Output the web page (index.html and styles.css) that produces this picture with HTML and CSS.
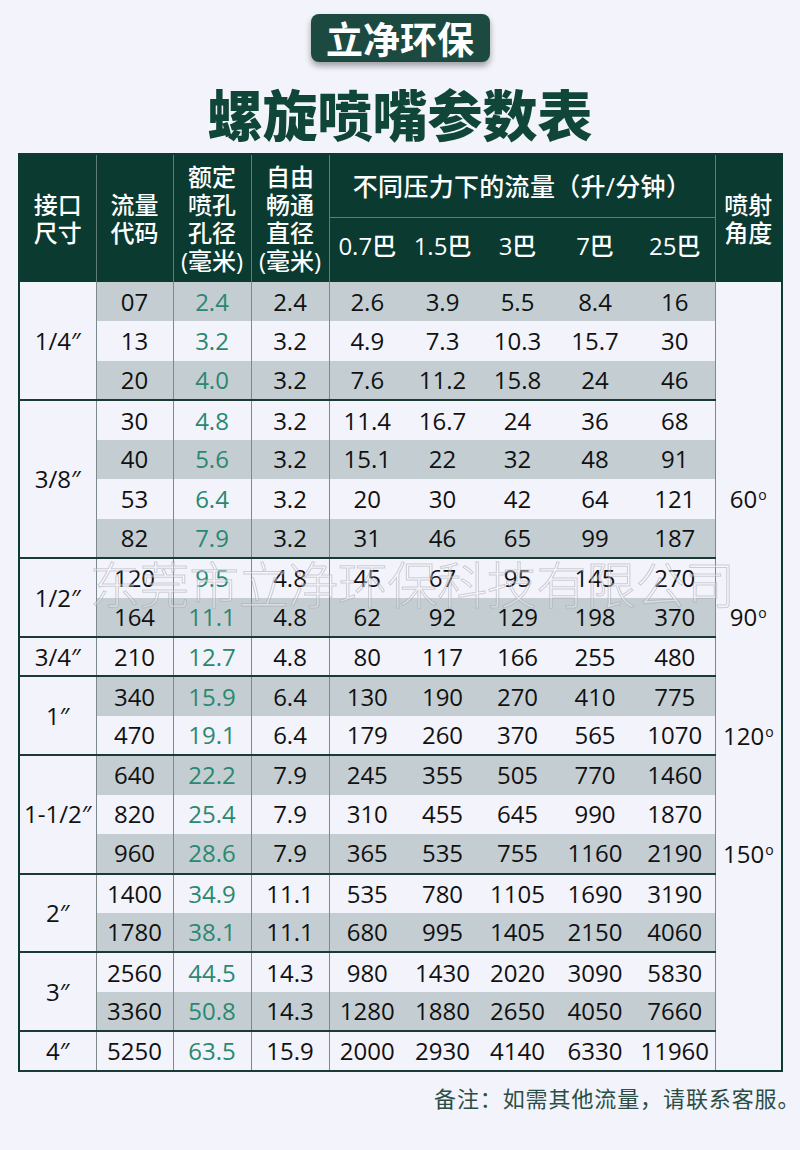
FILE: index.html
```html
<!DOCTYPE html>
<html lang="zh-CN">
<head>
<meta charset="utf-8">
<title>螺旋喷嘴参数表</title>
<link rel="stylesheet" href="styles.css">
</head>
<body>
<div class="page">
  <div class="brand"><span class="brand-text">立净环保</span></div>
  <h1 class="title">螺旋喷嘴参数表</h1>
  <table class="spec">
    <colgroup>
      <col class="c-size"><col class="c-code"><col class="c-orif"><col class="c-free">
      <col class="c-p1"><col class="c-p2"><col class="c-p3"><col class="c-p4"><col class="c-p5">
      <col class="c-ang">
    </colgroup>
    <thead>
      <tr class="h1">
        <th rowspan="2">接口<br>尺寸</th>
        <th rowspan="2">流量<br>代码</th>
        <th rowspan="2">额定<br>喷孔<br>孔径<br>(毫米)</th>
        <th rowspan="2">自由<br>畅通<br>直径<br>(毫米)</th>
        <th colspan="5" class="grp">不同压力下的流量（升/分钟）</th>
        <th rowspan="2">喷射<br>角度</th>
      </tr>
      <tr class="h2">
        <th>0.7巴</th><th>1.5巴</th><th>3巴</th><th>7巴</th><th>25巴</th>
      </tr>
    </thead>
    <tbody>
      <tr class="g"><td class="size" rowspan="3">1/4″</td><td>07</td><td class="grn">2.4</td><td>2.4</td><td>2.6</td><td>3.9</td><td>5.5</td><td>8.4</td><td>16</td><td class="ang" rowspan="5"></td></tr>
      <tr><td>13</td><td class="grn">3.2</td><td>3.2</td><td>4.9</td><td>7.3</td><td>10.3</td><td>15.7</td><td>30</td></tr>
      <tr class="g end"><td>20</td><td class="grn">4.0</td><td>3.2</td><td>7.6</td><td>11.2</td><td>15.8</td><td>24</td><td>46</td></tr>

      <tr><td class="size" rowspan="4">3/8″</td><td>30</td><td class="grn">4.8</td><td>3.2</td><td>11.4</td><td>16.7</td><td>24</td><td>36</td><td>68</td></tr>
      <tr class="g"><td>40</td><td class="grn">5.6</td><td>3.2</td><td>15.1</td><td>22</td><td>32</td><td>48</td><td>91</td></tr>
      <tr><td>53</td><td class="grn">6.4</td><td>3.2</td><td>20</td><td>30</td><td>42</td><td>64</td><td>121</td><td class="ang">60<sup>o</sup></td></tr>
      <tr class="g end"><td>82</td><td class="grn">7.9</td><td>3.2</td><td>31</td><td>46</td><td>65</td><td>99</td><td>187</td><td class="ang" rowspan="2"></td></tr>

      <tr><td class="size" rowspan="2">1/2″</td><td>120</td><td class="grn">9.5</td><td>4.8</td><td>45</td><td>67</td><td>95</td><td>145</td><td>270</td></tr>
      <tr class="g end"><td>164</td><td class="grn">11.1</td><td>4.8</td><td>62</td><td>92</td><td>129</td><td>198</td><td>370</td><td class="ang">90<sup>o</sup></td></tr>

      <tr class="end"><td class="size">3/4″</td><td>210</td><td class="grn">12.7</td><td>4.8</td><td>80</td><td>117</td><td>166</td><td>255</td><td>480</td><td class="ang" rowspan="2"></td></tr>

      <tr class="g"><td class="size" rowspan="2">1″</td><td>340</td><td class="grn">15.9</td><td>6.4</td><td>130</td><td>190</td><td>270</td><td>410</td><td>775</td></tr>
      <tr class="end"><td>470</td><td class="grn">19.1</td><td>6.4</td><td>179</td><td>260</td><td>370</td><td>565</td><td>1070</td><td class="ang">120<sup>o</sup></td></tr>

      <tr class="g"><td class="size" rowspan="3">1-1/2″</td><td>640</td><td class="grn">22.2</td><td>7.9</td><td>245</td><td>355</td><td>505</td><td>770</td><td>1460</td><td class="ang" rowspan="2"></td></tr>
      <tr><td>820</td><td class="grn">25.4</td><td>7.9</td><td>310</td><td>455</td><td>645</td><td>990</td><td>1870</td></tr>
      <tr class="g end"><td>960</td><td class="grn">28.6</td><td>7.9</td><td>365</td><td>535</td><td>755</td><td>1160</td><td>2190</td><td class="ang">150<sup>o</sup></td></tr>

      <tr><td class="size" rowspan="2">2″</td><td>1400</td><td class="grn">34.9</td><td>11.1</td><td>535</td><td>780</td><td>1105</td><td>1690</td><td>3190</td><td class="ang" rowspan="5"></td></tr>
      <tr class="g end"><td>1780</td><td class="grn">38.1</td><td>11.1</td><td>680</td><td>995</td><td>1405</td><td>2150</td><td>4060</td></tr>

      <tr><td class="size" rowspan="2">3″</td><td>2560</td><td class="grn">44.5</td><td>14.3</td><td>980</td><td>1430</td><td>2020</td><td>3090</td><td>5830</td></tr>
      <tr class="g end"><td>3360</td><td class="grn">50.8</td><td>14.3</td><td>1280</td><td>1880</td><td>2650</td><td>4050</td><td>7660</td></tr>

      <tr class="end"><td class="size">4″</td><td>5250</td><td class="grn">63.5</td><td>15.9</td><td>2000</td><td>2930</td><td>4140</td><td>6330</td><td>11960</td></tr>
    </tbody>
  </table>
  <p class="note">备注：如需其他流量，请联系客服。</p>
  <div class="watermark">东莞市立净环保科技有限公司</div>
</div>
</body>
</html>
```

FILE: styles.css
```css
html, body {
  margin: 0;
  padding: 0;
  background: #f2f3fb;
}

.page {
  position: relative;
  width: 800px;
  height: 1150px;
  display: flex;
  flex-direction: column;
  align-items: center;
  font-family: "Open Sans", "Noto Sans CJK SC", sans-serif;
}

.brand {
  margin-top: 14px;
  width: 179px;
  height: 48px;
  border-radius: 8px;
  background: #1c4a41;
  box-shadow: 0 4px 6px rgba(0, 0, 0, 0.35);
  display: flex;
  align-items: center;
  justify-content: center;
}

.brand-text {
  font-family: "Noto Sans CJK SC", sans-serif;
  font-weight: 700;
  font-size: 37px;
  line-height: 48px;
  color: #ffffff;
}

.title {
  margin: 0;
  padding-top: 10px;
  height: 81px;
  line-height: 81px;
  font-family: "Noto Sans CJK SC", sans-serif;
  font-weight: 900;
  font-size: 55px;
  color: #0f4637;
  letter-spacing: 0;
}

.spec {
  align-self: flex-start;
  margin-left: 18px;
  width: 763px;
  table-layout: fixed;
  border-collapse: collapse;
  border: 2px solid #0c3b33;
  font-size: 24px;
  color: #111111;
}

.c-size { width: 77px; }
.c-code { width: 77px; }
.c-orif { width: 78px; }
.c-free { width: 78px; }
.c-p1 { width: 76px; }
.c-p2 { width: 75px; }
.c-p3 { width: 75px; }
.c-p4 { width: 80px; }
.c-p5 { width: 80px; }
.c-ang { width: 67px; }

.spec th {
  background: #0b3a31;
  color: #ffffff;
  font-family: "Open Sans", "Noto Sans CJK SC", sans-serif;
  font-weight: 500;
  font-size: 24px;
  line-height: 28px;
  padding: 0;
  text-align: center;
  vertical-align: middle;
  border-left: 1px solid #5f7c75;
  border-right: 1px solid #5f7c75;
}

.spec th.grp {
  font-size: 25px;
  letter-spacing: 0.3px;
}

.spec .h1 { height: 63px; }
.spec .h2 { height: 65px; }

.spec .h2 th {
  border-top: 1px solid #5f7c75;
  border-left: none;
  border-right: none;
  padding-bottom: 7px;
}

.spec .h2 th:last-child { border-right: 1px solid #5f7c75; }

.spec tbody tr { height: 39.45px; }

.spec td {
  padding: 0;
  text-align: center;
  vertical-align: middle;
  line-height: 28px;
  background: #f3f3fb;
  white-space: nowrap;
  border: none;
}

.spec tbody tr.g td { background: #c4ced2; }

.spec tbody td:first-child:not(.size),
.spec td.size + td,
.spec tbody td.grn,
.spec tbody td.grn + td,
.spec tbody td.grn + td + td {
  border-left: 1px solid #7d8a89;
}

.spec tbody tr td.size,
.spec tbody tr.g td.size {
  background: #f3f3fb;
  border-bottom: 2px solid #1b3a35;
  border-right: 1px solid #7d8a89;
}

.spec tr.end td { border-bottom: 2px solid #1b3a35; }

.spec td.grn { color: #2a8870; }

.spec tbody tr td.ang,
.spec tbody tr.g td.ang,
.spec tbody tr.end td.ang {
  background: #f3f3fb;
  border-left: 1px solid #7d8a89;
  border-bottom: none;
  border-top: none;
}

.spec td.ang sup {
  font-size: 14px;
  vertical-align: 8px;
  line-height: 0;
  margin-left: 1px;
}

.note {
  align-self: flex-start;
  margin: 13px 0 0 0;
  padding-left: 434px;
  white-space: nowrap;
  font-family: "Noto Sans CJK SC", sans-serif;
  font-size: 22px;
  letter-spacing: 0.9px;
  line-height: 24px;
  color: #2b4d46;
}

.watermark {
  position: absolute;
  left: 90px;
  top: 555px;
  font-family: "Noto Sans CJK SC", sans-serif;
  font-weight: 300;
  font-size: 50px;
  line-height: 54px;
  letter-spacing: -0.4px;
  white-space: nowrap;
  color: rgba(255, 255, 255, 0.35);
  -webkit-text-stroke: 1px rgba(150, 152, 165, 0.45);
  pointer-events: none;
}
```
